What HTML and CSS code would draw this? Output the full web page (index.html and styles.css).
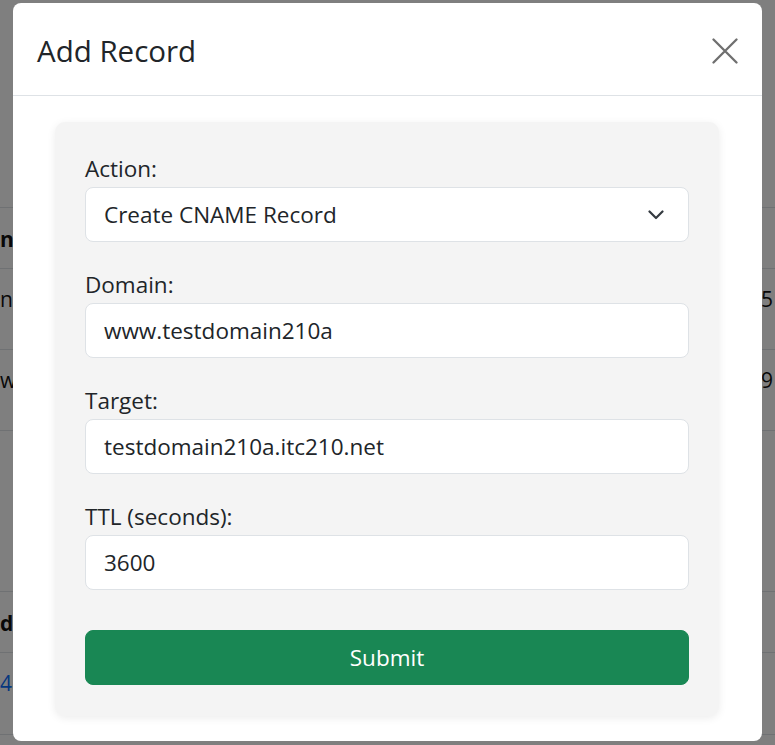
FILE: index.html
```html
<!DOCTYPE html>
<html lang="en">
<head>
<meta charset="utf-8">
<title>Add Record</title>
<link rel="stylesheet" href="styles.css">
</head>
<body>
<div class="page">
  <div class="table">
    <div class="trow thead"><span class="lcell"><b>n</b></span><span class="rcell"></span></div>
    <div class="trow"><span class="lcell">n</span><span class="rcell">5</span></div>
    <div class="trow"><span class="lcell">w</span><span class="rcell">9</span></div>
  </div>
  <div class="table table2">
    <div class="trow thead"><span class="lcell"><b>d</b></span><span class="rcell"></span></div>
    <div class="trow"><span class="lcell link">4.</span><span class="rcell"></span></div>
  </div>
</div>
<div class="backdrop"></div>
<div class="modal">
  <div class="modal-header">
    <h2 class="modal-title">Add Record</h2>
    <button class="close-btn" type="button" aria-label="Close">
      <svg width="26" height="26" viewBox="0 0 26 26"><path d="M1.5 1.5 L24.5 24.5 M24.5 1.5 L1.5 24.5" stroke="#6f6f6f" stroke-width="2.3" stroke-linecap="round" fill="none"/></svg>
    </button>
  </div>
  <div class="modal-body">
    <form class="card">
      <div class="group">
        <label class="label">Action:</label>
        <div class="field select">
          <span>Create CNAME Record</span>
          <svg width="16" height="10" viewBox="0 0 16 10"><polyline points="1.5,1.5 8,8 14.5,1.5" stroke="#343a40" stroke-width="2.2" fill="none" stroke-linecap="round" stroke-linejoin="round"/></svg>
        </div>
      </div>
      <div class="group">
        <label class="label">Domain:</label>
        <div class="field">www.testdomain210a</div>
      </div>
      <div class="group">
        <label class="label">Target:</label>
        <div class="field">testdomain210a.itc210.net</div>
      </div>
      <div class="group">
        <label class="label">TTL (seconds):</label>
        <div class="field">3600</div>
      </div>
      <button class="submit" type="button">Submit</button>
    </form>
  </div>
</div>
</body>
</html>
```
FILE: styles.css
```css
* { box-sizing: border-box; }
html, body { margin: 0; padding: 0; }
body {
  width: 775px;
  height: 745px;
  overflow: hidden;
  background: #ffffff;
  font-family: "Open Sans", "Noto Sans", sans-serif;
  color: #212529;
  position: relative;
}
.page { padding-top: 207px; }
.table { border-bottom: 1px solid #dee2e6; }
.table2 { margin-top: 160px; }
.trow {
  display: flex;
  justify-content: space-between;
  border-top: 1px solid #dee2e6;
  height: 81px;
  padding-top: 16px;
  font-size: 21px;
  line-height: 28px;
  color: #111;
}
.thead { height: 61px; padding-top: 17px; }
.lcell {
  width: 13px;
  white-space: nowrap;
  display: flex;
}
.rcell { width: 14px; white-space: nowrap; }
.link { color: #0d6efd; }
.table2 .trow:last-child { height: 82px; }

.backdrop {
  position: absolute;
  inset: 0;
  background: rgba(0, 0, 0, 0.5);
}
.modal {
  position: absolute;
  top: 3px;
  left: 13px;
  width: 749px;
  height: 738px;
  background: #fff;
  border-radius: 8px;
  display: flex;
  flex-direction: column;
}
.modal-header {
  height: 93px;
  border-bottom: 1px solid #dee2e6;
  display: flex;
  align-items: center;
  justify-content: space-between;
  padding: 0 24px 0 24px;
}
.modal-title {
  margin: 0;
  font-size: 29.5px;
  font-weight: 500;
  line-height: 1.2;
  color: #212529;
  padding-top: 3px;
}
.close-btn {
  border: 0;
  background: transparent;
  padding: 0;
  width: 26px;
  height: 26px;
  display: flex;
  margin-top: 3px;
}
.modal-body { padding: 26px 43px 0 42px; }
.card {
  background: #f4f4f4;
  border-radius: 10px;
  box-shadow: 0 2px 8px rgba(0, 0, 0, 0.08);
  padding: 32px 30px 31px;
  display: flex;
  flex-direction: column;
}
.group { display: flex; flex-direction: column; margin-bottom: 28px; }
.group:nth-last-child(2) { margin-bottom: 40px; }
.label {
  font-size: 22.5px;
  line-height: 30px;
  margin-bottom: 3px;
  color: #212529;
}
.field {
  height: 55px;
  background: #fff;
  border: 1px solid #dee2e6;
  border-radius: 8px;
  padding: 0 18px;
  font-size: 22.5px;
  display: flex;
  align-items: center;
  justify-content: space-between;
  color: #212529;
}
.select svg { margin-right: 6px; }
.submit {
  height: 55px;
  border: 1px solid #198754;
  border-radius: 8px;
  background: #198754;
  color: #fff;
  font-family: inherit;
  font-size: 22.5px;
  padding: 0;
}
```
